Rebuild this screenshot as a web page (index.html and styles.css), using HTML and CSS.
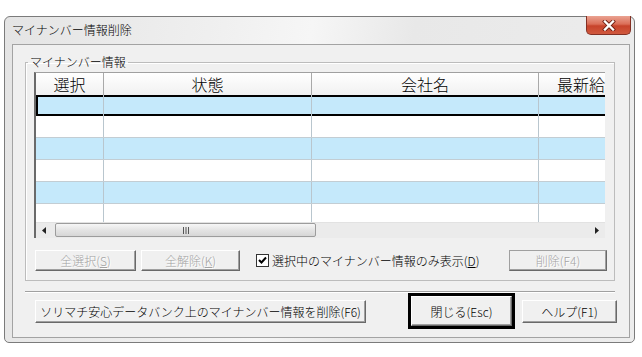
FILE: index.html
```html
<!DOCTYPE html>
<html>
<head>
    <title>マイナンバー情報削除</title>
    <meta charset="UTF-8">
    <link rel="stylesheet" href="styles.css">
</head>
<body>
    <div class="window">
        <div class="titlebar">
            <span class="title">マイナンバー情報削除</span>
            <button class="close-btn">
                <svg width="14" height="11" viewBox="0 0 14 11">
                    <path d="M3 1.5 L11 9.5 M11 1.5 L3 9.5" stroke="#6b1d12" stroke-width="4" stroke-linecap="square"/>
                    <path d="M3 1.5 L11 9.5 M11 1.5 L3 9.5" stroke="#fff" stroke-width="2.4" stroke-linecap="square"/>
                </svg>
            </button>
        </div>

        <div class="client">
            <fieldset class="group">
                <legend>マイナンバー情報</legend>

                <div class="grid">
                    <div class="grid-row grid-head">
                        <div class="cell">選択</div>
                        <div class="cell">状態</div>
                        <div class="cell">会社名</div>
                        <div class="cell">最新給</div>
                    </div>
                    <div class="grid-body">
                        <div class="grid-row row row-blue row-sel"><div class="cell"></div><div class="cell"></div><div class="cell"></div><div class="cell"></div></div>
                        <div class="grid-row row"><div class="cell"></div><div class="cell"></div><div class="cell"></div><div class="cell"></div></div>
                        <div class="grid-row row row-blue"><div class="cell"></div><div class="cell"></div><div class="cell"></div><div class="cell"></div></div>
                        <div class="grid-row row"><div class="cell"></div><div class="cell"></div><div class="cell"></div><div class="cell"></div></div>
                        <div class="grid-row row row-blue"><div class="cell"></div><div class="cell"></div><div class="cell"></div><div class="cell"></div></div>
                        <div class="grid-row row"><div class="cell"></div><div class="cell"></div><div class="cell"></div><div class="cell"></div></div>
                    </div>
                    <div class="hscroll">
                        <div class="arrow">
                            <svg width="4" height="7" viewBox="0 0 4 7"><path d="M4 0 L0 3.5 L4 7 Z" fill="#222"/></svg>
                        </div>
                        <div class="thumb">
                            <svg width="8" height="7" viewBox="0 0 8 7"><path d="M1.5 0 V7 M4 0 V7 M6.5 0 V7" stroke="#555" stroke-width="1"/></svg>
                        </div>
                        <div class="track"></div>
                        <div class="arrow">
                            <svg width="4" height="7" viewBox="0 0 4 7"><path d="M0 0 L4 3.5 L0 7 Z" fill="#222"/></svg>
                        </div>
                    </div>
                </div>

                <div class="actions">
                    <button class="btn btn-sel" disabled>全選択(<u>S</u>)</button>
                    <button class="btn btn-unsel" disabled>全解除(<u>K</u>)</button>
                    <label class="check">
                        <span class="check-box">
                            <svg width="9" height="9" viewBox="0 0 9 9"><path d="M1 4 L3.5 6.5 L8 1.5" stroke="#000" stroke-width="2" fill="none"/></svg>
                        </span>
                        <span>選択中のマイナンバー情報のみ表示(<u>D</u>)</span>
                    </label>
                    <button class="btn btn-del" disabled>削除(F4)</button>
                </div>
            </fieldset>

            <div class="separator"></div>

            <div class="footer">
                <button class="btn btn-bank">ソリマチ安心データバンク上のマイナンバー情報を削除(F6)</button>
                <div class="default-frame">
                    <button class="btn btn-close">閉じる(Esc)</button>
                </div>
                <button class="btn btn-help">ヘルプ(F1)</button>
            </div>
        </div>
    </div>
</body>
</html>
```

FILE: styles.css
```css
* { margin: 0; padding: 0; box-sizing: border-box; }
body { font-family: "Noto Sans CJK JP", "Noto Sans", sans-serif; font-size: 12px; font-weight: 300; color: #000; background: #fff; padding: 16px 0 0 4px; }

/* window frame */
.window { width: 631px; height: 327px; border: 1px solid #7b7b7b; border-radius: 6px 6px 5px 5px; background: linear-gradient(100deg, #e4e4e4 0%, #efefef 30%, #f6f6f6 45%, #e8e8e8 60%, #ededed 100%); }
.titlebar { display: flex; justify-content: space-between; height: 27px; padding-left: 7px; }
.title { line-height: 26px; font-size: 12px; }
.close-btn { width: 45px; height: 19px; margin-right: 3px; margin-top: -1px; border: 1px solid #833024; border-top: none; border-radius: 0 0 5px 5px; background: linear-gradient(#eaa392 0%, #db6e58 45%, #c7432b 55%, #d0593e 100%); display: flex; align-items: center; justify-content: center; }

.client { margin: 0 4px 4px 7px; height: 294px; border: 1px solid #a3a3a3; background: #f0f0f0; padding-left: 12px; }

/* group box */
.group { margin-top: 9px; width: 590px; border: 1px solid #bcbcbc; box-shadow: inset 1px 1px 0 #fff; padding: 2px 9px 9px 8px; }
.group legend { margin-left: -6px; padding: 0 2px; line-height: 16px; font-size: 12px; }

/* grid */
.grid { width: 571px; height: 166px; border-left: 2px solid #6a6a6a; border-top: 1px solid #a0a0a0; background: #fff; overflow: hidden; }
.grid-row { display: grid; grid-template-columns: 68px 208px 227px 110px; width: 613px; }
.grid-head { height: 22px; background: linear-gradient(#ffffff, #f1f1f1); }
.grid-head .cell { border-right: 1px solid #a9a9a9; text-align: center; font-size: 16px; line-height: 22px; }
.grid-head .cell:last-child { text-align: left; padding-left: 18px; }
.grid-body { height: 127px; overflow: hidden; }
.row { height: 22px; border-bottom: 1px solid #c3cdd3; background: #fff; }
.row .cell { border-right: 1px solid #b9c6ce; }
.row-blue { background: #c5e9fb; }
.row-sel { height: 21px; border-bottom: none; box-shadow: inset 2px 2px 0 #000, inset 0 -2px 0 #000; }

.hscroll { display: flex; height: 16px; background: #ebebeb; border-top: 1px solid #e2e2e2; }
.arrow { width: 16px; display: flex; align-items: center; justify-content: center; }
.thumb { width: 261px; margin: 0 0 1px 3px; border: 1px solid #9c9c9c; border-radius: 2px; background: linear-gradient(#f6f6f6, #e4e4e4 50%, #d6d6d6); display: flex; align-items: center; justify-content: center; }
.track { flex: 1; }

/* buttons */
.btn { font-family: inherit; font-size: 12px; font-weight: 300; color: #000; background: #f0f0f0; border: 1px solid; border-color: #fff #696969 #696969 #fff; box-shadow: inset -1px -1px 0 #a0a0a0; height: 21px; }
.btn:disabled { color: #a3a3a3; text-shadow: 1px 1px 0 #fff; }
.btn u { text-underline-offset: 1px; }

.actions { display: flex; align-items: center; margin-top: 12px; height: 21px; }
.btn-sel { margin-left: 1px; width: 101px; }
.btn-unsel { margin-left: 5px; width: 99px; }
.check { margin-left: 16px; display: flex; align-items: center; gap: 3px; }
.check-box { width: 13px; height: 13px; border: 1px solid #333; background: #fff; display: flex; align-items: center; justify-content: center; }
.btn-del { margin-left: auto; margin-right: -2px; width: 98px; border-color: #a0a0a0 #696969 #696969 #a0a0a0; }

.separator { margin-top: 10px; width: 590px; border-top: 1px solid #a0a0a0; border-bottom: 1px solid #fff; }

.footer { display: flex; align-items: center; height: 36px; }
.btn-bank { margin-left: 10px; width: 331px; height: 23px; }
.default-frame { margin-left: 42px; width: 107px; height: 36px; border: 3px solid #000; display: flex; }
.btn-close { width: 100%; height: 100%; }
.btn-help { margin-left: 7px; width: 95px; height: 23px; }
```
